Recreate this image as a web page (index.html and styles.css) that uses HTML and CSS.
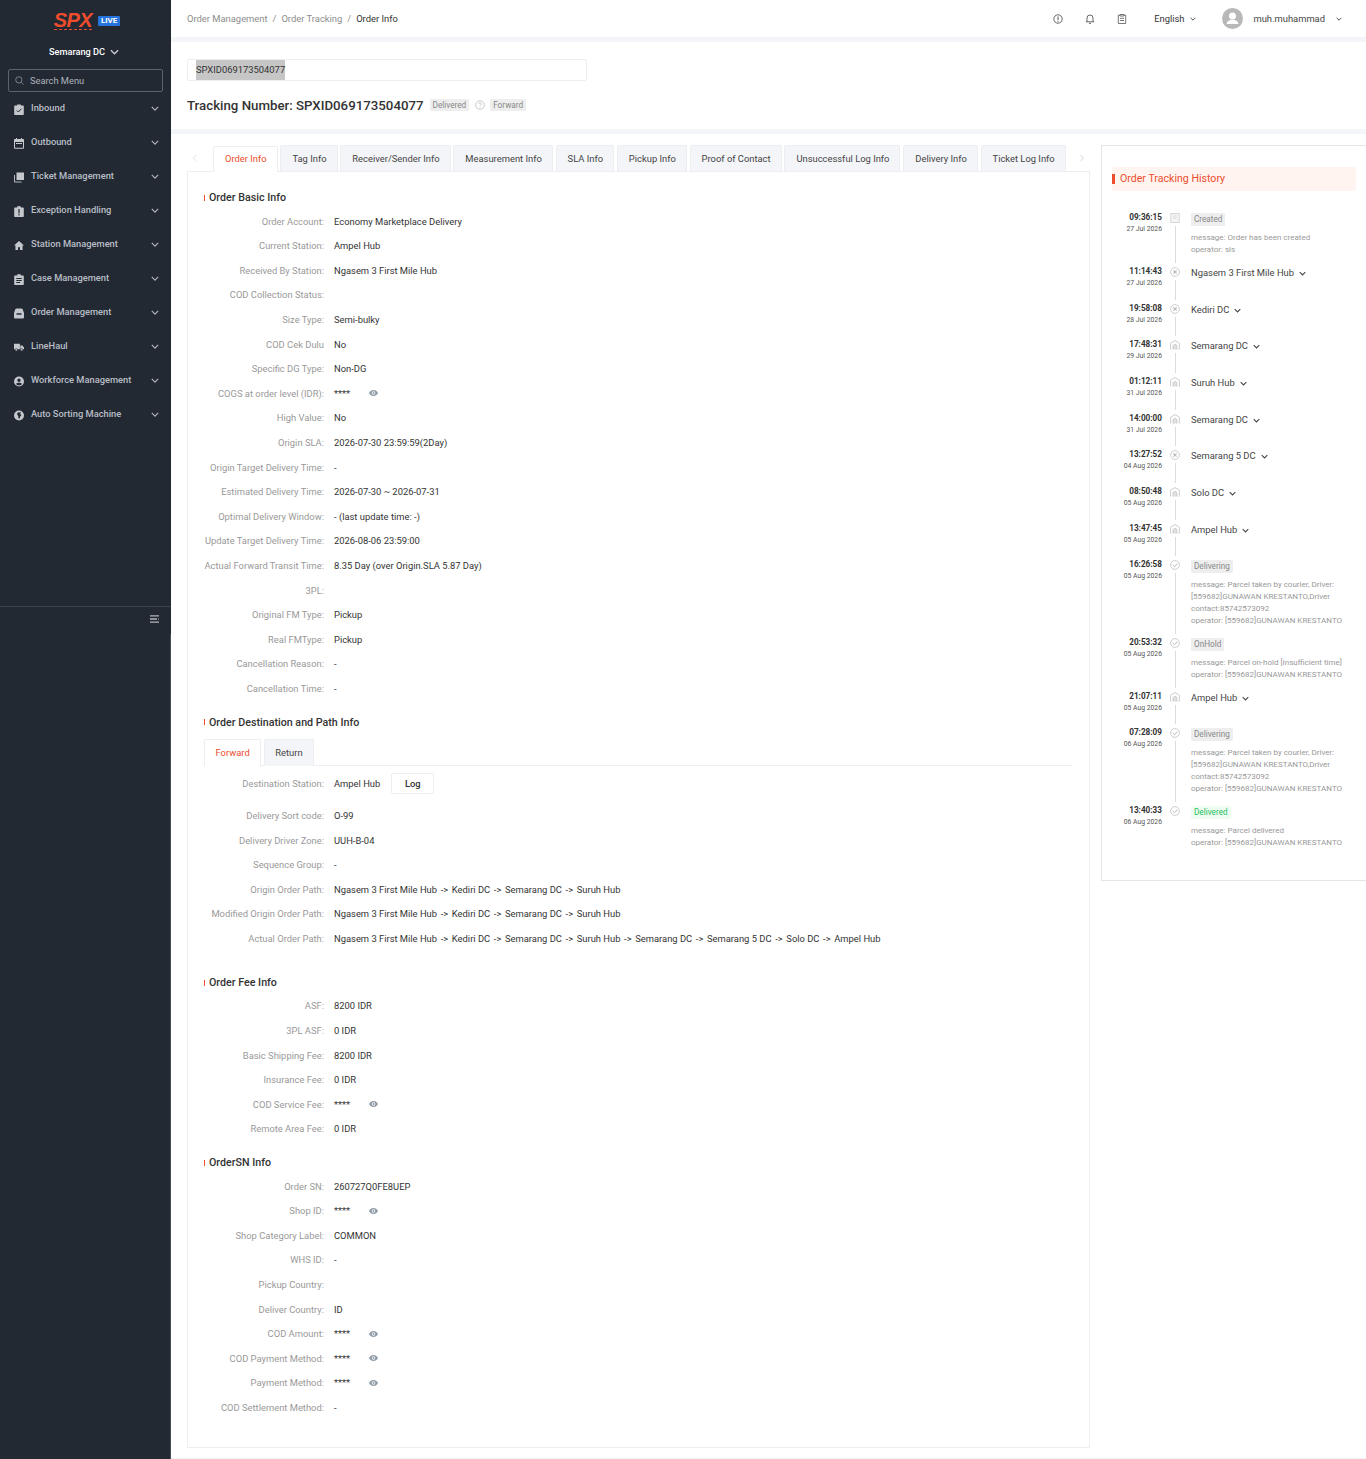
FILE: index.html
```html
<!DOCTYPE html>
<html lang="en">
<head>
<meta charset="utf-8">
<title>Order Info</title>
<link rel="stylesheet" href="styles.css">
</head>
<body>
<svg class="defs" width="0" height="0" aria-hidden="true">
  <symbol id="chev" viewBox="0 0 10 6"><path d="M1 1l4 4 4-4" fill="none" stroke="currentColor" stroke-width="1.5"/></symbol>
  <symbol id="eye" viewBox="0 0 12 8"><path fill="currentColor" fill-rule="evenodd" d="M6 0C3.4 0 1.2 1.6 0 4c1.2 2.4 3.4 4 6 4s4.8-1.6 6-4c-1.2-2.4-3.4-4-6-4zm0 6.4A2.4 2.4 0 1 1 6 1.600a2.400 2.400 0 0 1 0 4.800zM6 2.700a1.300 1.300 0 1 0 0 2.600 1.300 1.300 0 0 0 0-2.600z"/></symbol>
  <symbol id="t-doc" viewBox="0 0 10 10"><rect x=".8" y=".5" width="8.400" height="9" fill="#f4f4f4" stroke="#cfcfcf" stroke-width=".8"/><path d="M3 3h4M3 5h4" stroke="#d8d8d8" stroke-width=".8"/></symbol>
  <symbol id="t-x" viewBox="0 0 10 10"><circle cx="5" cy="5" r="4.400" fill="none" stroke="#c8c8c8" stroke-width=".9"/><path d="M3.300 3.300l3.400 3.400M6.700 3.300l-3.400 3.400" stroke="#b8b8b8" stroke-width="1.100"/></symbol>
  <symbol id="t-house" viewBox="0 0 10 10"><path d="M.6 9.600V3.200L5 .6l4.400 2.600v6.400" fill="none" stroke="#c8c8c8" stroke-width=".9"/><path d="M3 9.600V5.500l2-1.300 2 1.300v4.100" fill="#e0e0e0" stroke="#c8c8c8" stroke-width=".8"/></symbol>
  <symbol id="t-check" viewBox="0 0 10 10"><circle cx="5" cy="5" r="4.400" fill="none" stroke="#c8c8c8" stroke-width=".9"/><path d="M2.800 5l1.700 1.700 2.800-3" fill="none" stroke="#b8b8b8" stroke-width="1"/></symbol>
  <symbol id="m-inbound" viewBox="0 0 10 11"><path fill="currentColor" d="M1 1.500h2.200V.5h3.600v1H9a.8.800 0 0 1 .8.800v7.900a.8.800 0 0 1-.8.800H1a.8.800 0 0 1-.8-.8V2.300A.8.800 0 0 1 1 1.500z"/><path d="M2.800 6.400l1.600 1.600 3-3.200" fill="none" stroke="#222933" stroke-width="1"/></symbol>
  <symbol id="m-outbound" viewBox="0 0 10 11"><path fill="currentColor" d="M2 0h1v1h4V0h1v1h1.200a.8.800 0 0 1 .8.800V10a.8.800 0 0 1-.8.800H.8A.8.800 0 0 1 0 10V1.800A.8.800 0 0 1 .8 1H2zM1 4v5.800h8V4z"/><path fill="currentColor" d="M2 5h6v1H2z"/></symbol>
  <symbol id="m-ticket" viewBox="0 0 10 10"><path fill="currentColor" d="M2.500 0H10v7.500H2.500z"/><path fill="none" stroke="currentColor" stroke-width=".9" d="M.5 2.500v7h7"/></symbol>
  <symbol id="m-exception" viewBox="0 0 10 11"><path fill="currentColor" fill-rule="evenodd" d="M1 1.500h2.200V.3h3.600v1.200H9a.8.800 0 0 1 .8.800v7.900a.8.800 0 0 1-.8.800H1a.8.800 0 0 1-.8-.8V2.300A.8.800 0 0 1 1 1.500zM4.400 3v4.500h1.200V3zm0 5.200v1.200h1.200V8.200z"/></symbol>
  <symbol id="m-home" viewBox="0 0 11 10"><path fill="currentColor" d="M5.500 0L11 5H9.400v5H6.600V6.800H4.400V10H1.600V5H0z"/></symbol>
  <symbol id="m-case" viewBox="0 0 10 11"><path fill="currentColor" fill-rule="evenodd" d="M1 1.500h2.200V.3h3.600v1.200H9a.8.800 0 0 1 .8.800v7.900a.8.800 0 0 1-.8.800H1a.8.800 0 0 1-.8-.8V2.300A.8.800 0 0 1 1 1.500zM2.300 4v1h5.400V4zm0 2v1h5.400V6zm0 2v1h3.800V8z"/></symbol>
  <symbol id="m-order" viewBox="0 0 10 10"><path fill="currentColor" fill-rule="evenodd" d="M2.600 0h4.800a1.500 1.500 0 0 1 1.400 1L10 4.500V9a1 1 0 0 1-1 1H1a1 1 0 0 1-1-1V4.500L1.200 1A1.500 1.500 0 0 1 2.600 0zM2.500 4.800v1.400h5V4.800z"/></symbol>
  <symbol id="m-truck" viewBox="0 0 11 8"><path fill="currentColor" d="M0 0h6.500v6H0zM7 1.800h2.200L11 3.900V6H7z"/><circle cx="2.500" cy="6.500" r="1.300" fill="currentColor" stroke="#222933" stroke-width=".6"/><circle cx="8.500" cy="6.500" r="1.300" fill="currentColor" stroke="#222933" stroke-width=".6"/></symbol>
  <symbol id="m-user" viewBox="0 0 10 10"><path fill="currentColor" fill-rule="evenodd" d="M5 0a5 5 0 1 1 0 10A5 5 0 0 1 5 0zm0 2a1.700 1.700 0 1 0 0 3.400A1.700 1.700 0 0 0 5 2zM2 7.600c.7.800 1.800 1.300 3 1.300s2.300-.5 3-1.300C7.500 6.600 6.300 6.200 5 6.200s-2.500.4-3 1.400z"/></symbol>
  <symbol id="m-globe" viewBox="0 0 10 10"><path fill="currentColor" fill-rule="evenodd" d="M5 0a5 5 0 1 1 0 10A5 5 0 0 1 5 0zM3.700 2L3 4l1.500 1.500-.4 1.800 1.400 1 .7-2.300L7.300 5 6.200 3.300l.8-1.500z"/></symbol>
</svg>

<div class="app">
  <aside class="sidebar">
    <div class="logo">
      <span class="logo-mark">SPX</span>
      <span class="logo-live">LIVE</span>
    </div>
    <div class="station">Semarang DC <svg class="station-chev"><use href="#chev"/></svg></div>
    <div class="menu-search">
      <svg class="menu-search-icon" viewBox="0 0 10 10"><circle cx="4.300" cy="4.300" r="3.500" fill="none" stroke="currentColor" stroke-width=".9"/><path d="M7 7l2.500 2.500" stroke="currentColor" stroke-width=".9"/></svg>
      <span>Search Menu</span>
    </div>
    <nav class="menu">
      <div class="menu-item"><svg class="menu-icon"><use href="#m-inbound"/></svg><span class="menu-text">Inbound</span><svg class="menu-chev"><use href="#chev"/></svg></div>
      <div class="menu-item"><svg class="menu-icon"><use href="#m-outbound"/></svg><span class="menu-text">Outbound</span><svg class="menu-chev"><use href="#chev"/></svg></div>
      <div class="menu-item"><svg class="menu-icon"><use href="#m-ticket"/></svg><span class="menu-text">Ticket Management</span><svg class="menu-chev"><use href="#chev"/></svg></div>
      <div class="menu-item"><svg class="menu-icon"><use href="#m-exception"/></svg><span class="menu-text">Exception Handling</span><svg class="menu-chev"><use href="#chev"/></svg></div>
      <div class="menu-item"><svg class="menu-icon"><use href="#m-home"/></svg><span class="menu-text">Station Management</span><svg class="menu-chev"><use href="#chev"/></svg></div>
      <div class="menu-item"><svg class="menu-icon"><use href="#m-case"/></svg><span class="menu-text">Case Management</span><svg class="menu-chev"><use href="#chev"/></svg></div>
      <div class="menu-item"><svg class="menu-icon"><use href="#m-order"/></svg><span class="menu-text">Order Management</span><svg class="menu-chev"><use href="#chev"/></svg></div>
      <div class="menu-item"><svg class="menu-icon"><use href="#m-truck"/></svg><span class="menu-text">LineHaul</span><svg class="menu-chev"><use href="#chev"/></svg></div>
      <div class="menu-item"><svg class="menu-icon"><use href="#m-user"/></svg><span class="menu-text">Workforce Management</span><svg class="menu-chev"><use href="#chev"/></svg></div>
      <div class="menu-item"><svg class="menu-icon"><use href="#m-globe"/></svg><span class="menu-text">Auto Sorting Machine</span><svg class="menu-chev"><use href="#chev"/></svg></div>
    </nav>
    <div class="sidebar-foot">
      <svg class="collapse" viewBox="0 0 9 8"><path d="M0 .8h9M0 4h7M0 7.200h9" stroke="currentColor" stroke-width="1.300"/><path d="M8 3l1 1-1 1z" fill="currentColor"/></svg>
    </div>
    <div class="sidebar-rest"></div>
  </aside>

  <main class="main">
    <header class="topbar">
      <div class="crumbs">
        <span>Order Management</span><span class="crumb-sep">/</span><span>Order Tracking</span><span class="crumb-sep">/</span><span class="crumb-now">Order Info</span>
      </div>
      <div class="top-right">
        <svg class="top-icon" viewBox="0 0 10 10"><circle cx="5" cy="5" r="4.200" fill="none" stroke="currentColor" stroke-width=".9"/><path d="M5 2.500v3.500M5 6.800v1" stroke="currentColor" stroke-width="1"/></svg>
        <svg class="top-icon" viewBox="0 0 10 10"><path d="M2 7.500V4a3 3 0 0 1 6 0v3.500M.8 7.800h8.400M4 9.400h2" fill="none" stroke="currentColor" stroke-width=".9"/></svg>
        <svg class="top-icon" viewBox="0 0 10 10"><path d="M3 1.200H1.300v8.300h7.400V1.200H7M3 .5h4v1.500H3zM3 4.300h4M3 6.500h4" fill="none" stroke="currentColor" stroke-width=".8"/></svg>
        <span class="lang">English</span><svg class="top-chev"><use href="#chev"/></svg>
        <span class="avatar"><svg viewBox="0 0 21 21"><circle cx="10.500" cy="8" r="3.500" fill="#fff"/><path d="M4.500 16c.5-3 3-4.200 6-4.200s5.500 1.200 6 4.200z" fill="#fff"/></svg></span>
        <span class="user">muh.muhammad</span><svg class="top-chev user-chev"><use href="#chev"/></svg>
      </div>
    </header>

    <section class="search-area">
      <div class="search-input"><span class="selected">SPXID069173504077</span></div>
      <div class="title-row">
        <h1 class="track-title">Tracking Number: SPXID069173504077</h1>
        <span class="tag">Delivered</span>
        <svg class="help" viewBox="0 0 10 10"><circle cx="5" cy="5" r="4.300" fill="none" stroke="#b5b5b5" stroke-width=".7"/><path d="M3.700 4a1.300 1.300 0 1 1 1.900 1.100c-.4.300-.6.500-.6 1M5 7v.8" fill="none" stroke="#b5b5b5" stroke-width=".7"/></svg>
        <span class="tag">Forward</span>
      </div>
    </section>

    <section class="content">
      <div class="left">
        <div class="tabs-bar">
          <span class="tab-arrow tab-arrow-left"><svg viewBox="0 0 6 10"><path d="M5 1L1 5l4 4" fill="none" stroke="currentColor"/></svg></span>
          <span class="tab active">Order Info</span>
          <span class="tab">Tag Info</span>
          <span class="tab">Receiver/Sender Info</span>
          <span class="tab">Measurement Info</span>
          <span class="tab">SLA Info</span>
          <span class="tab">Pickup Info</span>
          <span class="tab">Proof of Contact</span>
          <span class="tab">Unsuccessful Log Info</span>
          <span class="tab">Delivery Info</span>
          <span class="tab">Ticket Log Info</span>
          <span class="tab-arrow tab-arrow-right"><svg viewBox="0 0 6 10"><path d="M1 1l4 4-4 4" fill="none" stroke="currentColor"/></svg></span>
        </div>
        <div class="panel">
          <h2 class="sec-title sec-first">Order Basic Info</h2>
          <div class="row"><span class="lbl">Order Account:</span><span class="val">Economy Marketplace Delivery</span></div>
          <div class="row"><span class="lbl">Current Station:</span><span class="val">Ampel Hub</span></div>
          <div class="row"><span class="lbl">Received By Station:</span><span class="val">Ngasem 3 First Mile Hub</span></div>
          <div class="row"><span class="lbl">COD Collection Status:</span><span class="val"></span></div>
          <div class="row"><span class="lbl">Size Type:</span><span class="val">Semi-bulky</span></div>
          <div class="row"><span class="lbl">COD Cek Dulu</span><span class="val">No</span></div>
          <div class="row"><span class="lbl">Specific DG Type:</span><span class="val">Non-DG</span></div>
          <div class="row"><span class="lbl">COGS at order level (IDR):</span><span class="val">****</span><svg class="eye"><use href="#eye"/></svg></div>
          <div class="row"><span class="lbl">High Value:</span><span class="val">No</span></div>
          <div class="row"><span class="lbl">Origin SLA:</span><span class="val">2026-07-30 23:59:59(2Day)</span></div>
          <div class="row"><span class="lbl">Origin Target Delivery Time:</span><span class="val">-</span></div>
          <div class="row"><span class="lbl">Estimated Delivery Time:</span><span class="val">2026-07-30 ~ 2026-07-31</span></div>
          <div class="row"><span class="lbl">Optimal Delivery Window:</span><span class="val">- (last update time: -)</span></div>
          <div class="row"><span class="lbl">Update Target Delivery Time:</span><span class="val">2026-08-06 23:59:00</span></div>
          <div class="row"><span class="lbl">Actual Forward Transit Time:</span><span class="val">8.35 Day (over Origin.SLA 5.87 Day)</span></div>
          <div class="row"><span class="lbl">3PL:</span><span class="val"></span></div>
          <div class="row"><span class="lbl">Original FM Type:</span><span class="val">Pickup</span></div>
          <div class="row"><span class="lbl">Real FMType:</span><span class="val">Pickup</span></div>
          <div class="row"><span class="lbl">Cancellation Reason:</span><span class="val">-</span></div>
          <div class="row"><span class="lbl">Cancellation Time:</span><span class="val">-</span></div>

          <h2 class="sec-title sec-dest">Order Destination and Path Info</h2>
          <div class="sub-tabs">
            <span class="sub-tab active">Forward</span>
            <span class="sub-tab">Return</span>
          </div>
          <div class="row row-dest"><span class="lbl">Destination Station:</span><span class="val">Ampel Hub</span><span class="log-btn">Log</span></div>
          <div class="row"><span class="lbl">Delivery Sort code:</span><span class="val">O-99</span></div>
          <div class="row"><span class="lbl">Delivery Driver Zone:</span><span class="val">UUH-B-04</span></div>
          <div class="row"><span class="lbl">Sequence Group:</span><span class="val">-</span></div>
          <div class="row"><span class="lbl">Origin Order Path:</span><span class="val path">Ngasem 3 First Mile Hub<i>-&gt;</i>Kediri DC<i>-&gt;</i>Semarang DC<i>-&gt;</i>Suruh Hub</span></div>
          <div class="row"><span class="lbl">Modified Origin Order Path:</span><span class="val path">Ngasem 3 First Mile Hub<i>-&gt;</i>Kediri DC<i>-&gt;</i>Semarang DC<i>-&gt;</i>Suruh Hub</span></div>
          <div class="row"><span class="lbl">Actual Order Path:</span><span class="val path">Ngasem 3 First Mile Hub<i>-&gt;</i>Kediri DC<i>-&gt;</i>Semarang DC<i>-&gt;</i>Suruh Hub<i>-&gt;</i>Semarang DC<i>-&gt;</i>Semarang 5 DC<i>-&gt;</i>Solo DC<i>-&gt;</i>Ampel Hub</span></div>

          <h2 class="sec-title sec-fee">Order Fee Info</h2>
          <div class="row"><span class="lbl">ASF:</span><span class="val">8200 IDR</span></div>
          <div class="row"><span class="lbl">3PL ASF:</span><span class="val">0 IDR</span></div>
          <div class="row"><span class="lbl">Basic Shipping Fee:</span><span class="val">8200 IDR</span></div>
          <div class="row"><span class="lbl">Insurance Fee:</span><span class="val">0 IDR</span></div>
          <div class="row"><span class="lbl">COD Service Fee:</span><span class="val">****</span><svg class="eye"><use href="#eye"/></svg></div>
          <div class="row"><span class="lbl">Remote Area Fee:</span><span class="val">0 IDR</span></div>

          <h2 class="sec-title sec-sn">OrderSN Info</h2>
          <div class="row"><span class="lbl">Order SN:</span><span class="val">260727Q0FE8UEP</span></div>
          <div class="row"><span class="lbl">Shop ID:</span><span class="val">****</span><svg class="eye"><use href="#eye"/></svg></div>
          <div class="row"><span class="lbl">Shop Category Label:</span><span class="val">COMMON</span></div>
          <div class="row"><span class="lbl">WHS ID:</span><span class="val">-</span></div>
          <div class="row"><span class="lbl">Pickup Country:</span><span class="val"></span></div>
          <div class="row"><span class="lbl">Deliver Country:</span><span class="val">ID</span></div>
          <div class="row"><span class="lbl">COD Amount:</span><span class="val">****</span><svg class="eye"><use href="#eye"/></svg></div>
          <div class="row"><span class="lbl">COD Payment Method:</span><span class="val">****</span><svg class="eye"><use href="#eye"/></svg></div>
          <div class="row"><span class="lbl">Payment Method:</span><span class="val">****</span><svg class="eye"><use href="#eye"/></svg></div>
          <div class="row"><span class="lbl">COD Settlement Method:</span><span class="val">-</span></div>
        </div>
      </div>

      <aside class="history">
        <div class="history-head">Order Tracking History</div>
        <div class="timeline">
          <div class="ev ev-54"><div class="ev-time"><b>09:36:15</b><span>27 Jul 2026</span></div><div class="ev-rail"><svg class="ev-icon"><use href="#t-doc"/></svg><i class="ev-line"></i></div><div class="ev-body"><span class="ev-tag">Created</span><p class="ev-msg">message: Order has been created<br>operator: sls</p></div></div>
          <div class="ev ev-37"><div class="ev-time"><b>11:14:43</b><span>27 Jul 2026</span></div><div class="ev-rail"><svg class="ev-icon"><use href="#t-x"/></svg><i class="ev-line"></i></div><div class="ev-body"><div class="ev-node">Ngasem 3 First Mile Hub<svg class="node-chev"><use href="#chev"/></svg></div></div></div>
          <div class="ev ev-36"><div class="ev-time"><b>19:58:08</b><span>28 Jul 2026</span></div><div class="ev-rail"><svg class="ev-icon"><use href="#t-x"/></svg><i class="ev-line"></i></div><div class="ev-body"><div class="ev-node">Kediri DC<svg class="node-chev"><use href="#chev"/></svg></div></div></div>
          <div class="ev ev-37"><div class="ev-time"><b>17:48:31</b><span>29 Jul 2026</span></div><div class="ev-rail"><svg class="ev-icon"><use href="#t-house"/></svg><i class="ev-line"></i></div><div class="ev-body"><div class="ev-node">Semarang DC<svg class="node-chev"><use href="#chev"/></svg></div></div></div>
          <div class="ev ev-37"><div class="ev-time"><b>01:12:11</b><span>31 Jul 2026</span></div><div class="ev-rail"><svg class="ev-icon"><use href="#t-house"/></svg><i class="ev-line"></i></div><div class="ev-body"><div class="ev-node">Suruh Hub<svg class="node-chev"><use href="#chev"/></svg></div></div></div>
          <div class="ev ev-36"><div class="ev-time"><b>14:00:00</b><span>31 Jul 2026</span></div><div class="ev-rail"><svg class="ev-icon"><use href="#t-house"/></svg><i class="ev-line"></i></div><div class="ev-body"><div class="ev-node">Semarang DC<svg class="node-chev"><use href="#chev"/></svg></div></div></div>
          <div class="ev ev-37"><div class="ev-time"><b>13:27:52</b><span>04 Aug 2026</span></div><div class="ev-rail"><svg class="ev-icon"><use href="#t-x"/></svg><i class="ev-line"></i></div><div class="ev-body"><div class="ev-node">Semarang 5 DC<svg class="node-chev"><use href="#chev"/></svg></div></div></div>
          <div class="ev ev-37"><div class="ev-time"><b>08:50:48</b><span>05 Aug 2026</span></div><div class="ev-rail"><svg class="ev-icon"><use href="#t-house"/></svg><i class="ev-line"></i></div><div class="ev-body"><div class="ev-node">Solo DC<svg class="node-chev"><use href="#chev"/></svg></div></div></div>
          <div class="ev ev-36"><div class="ev-time"><b>13:47:45</b><span>05 Aug 2026</span></div><div class="ev-rail"><svg class="ev-icon"><use href="#t-house"/></svg><i class="ev-line"></i></div><div class="ev-body"><div class="ev-node">Ampel Hub<svg class="node-chev"><use href="#chev"/></svg></div></div></div>
          <div class="ev ev-78"><div class="ev-time"><b>16:26:58</b><span>05 Aug 2026</span></div><div class="ev-rail"><svg class="ev-icon"><use href="#t-check"/></svg><i class="ev-line"></i></div><div class="ev-body"><span class="ev-tag">Delivering</span><p class="ev-msg">message: Parcel taken by courier, Driver: [559682]GUNAWAN KRESTANTO,Driver contact:85742573092<br>operator: [559682]GUNAWAN KRESTANTO</p></div></div>
          <div class="ev ev-54"><div class="ev-time"><b>20:53:32</b><span>05 Aug 2026</span></div><div class="ev-rail"><svg class="ev-icon"><use href="#t-check"/></svg><i class="ev-line"></i></div><div class="ev-body"><span class="ev-tag">OnHold</span><p class="ev-msg">message: Parcel on-hold [Insufficient time]<br>operator: [559682]GUNAWAN KRESTANTO</p></div></div>
          <div class="ev ev-36"><div class="ev-time"><b>21:07:11</b><span>05 Aug 2026</span></div><div class="ev-rail"><svg class="ev-icon"><use href="#t-house"/></svg><i class="ev-line"></i></div><div class="ev-body"><div class="ev-node">Ampel Hub<svg class="node-chev"><use href="#chev"/></svg></div></div></div>
          <div class="ev ev-78"><div class="ev-time"><b>07:28:09</b><span>06 Aug 2026</span></div><div class="ev-rail"><svg class="ev-icon"><use href="#t-check"/></svg><i class="ev-line"></i></div><div class="ev-body"><span class="ev-tag">Delivering</span><p class="ev-msg">message: Parcel taken by courier, Driver: [559682]GUNAWAN KRESTANTO,Driver contact:85742573092<br>operator: [559682]GUNAWAN KRESTANTO</p></div></div>
          <div class="ev ev-last"><div class="ev-time"><b>13:40:33</b><span>06 Aug 2026</span></div><div class="ev-rail"><svg class="ev-icon"><use href="#t-check"/></svg></div><div class="ev-body"><span class="ev-tag ev-tag-ok">Delivered</span><p class="ev-msg">message: Parcel delivered<br>operator: [559682]GUNAWAN KRESTANTO</p></div></div>
        </div>
      </aside>
    </section>
  </main>
</div>
</body>
</html>
```

FILE: styles.css
```css
* { box-sizing: border-box; }
html, body { margin: 0; padding: 0; }
body {
  font-family: Roboto, "Liberation Sans", sans-serif;
  font-size: 9.4px;
  color: #333;
  background: #fff;
}
.defs { position: absolute; }
.app { display: flex; width: 1366px; height: 1459px; overflow: hidden; }

/* sidebar */
.sidebar {
  width: 171px;
  flex: none;
  background: #222933;
  color: #b9bec6;
  display: flex;
  flex-direction: column;
}
.logo { height: 36px; padding: 6px 0 0 3px; display: flex; justify-content: center; align-items: center; gap: 6px; }
.logo-mark {
  font-family: "Liberation Sans", sans-serif;
  font-weight: 700;
  font-style: italic;
  font-size: 20px;
  line-height: 17px;
  color: #ee4d2d;
  border-bottom: 1px dashed #ee4d2d;
  letter-spacing: -.6px;
}
.logo-live {
  background: #2673dd;
  color: #fff;
  font-weight: 700;
  font-size: 8px;
  line-height: 10px;
  padding: 0 3px;
  border-radius: 1px;
}
.station {
  height: 33px;
  display: flex;
  align-items: center;
  justify-content: center;
  gap: 5px;
  color: #fff;
  font-weight: 500;
  font-size: 9.2px;
  padding: 0 3px 2px 0;
}
.station-chev { width: 9px; height: 6px; color: #c7cad0; }
.menu-search {
  margin: 0 8px;
  height: 23px;
  border: 1px solid #5d636d;
  border-radius: 2px;
  display: flex;
  align-items: center;
  gap: 6px;
  padding: 0 0 1px 6px;
  color: #aeb3bc;
  font-size: 9.3px;
}
.menu-search-icon { width: 9px; height: 9px; color: #8f949c; }
.menu { height: 514px; flex: none; margin-top: -1px; font-size: 9.3px; }
.menu-item {
  height: 34px;
  display: flex;
  align-items: center;
  padding: 0 12px 0 14px;
  font-weight: 500;
}
.menu-icon { width: 10px; height: 11px; flex: none; color: #c4c7cc; margin-top: 2px; }
.menu-text { flex: 1; margin-left: 7px; margin-top: -2px; }
.menu-chev { width: 8px; height: 5px; color: #aeb3bc; flex: none; }
.sidebar-foot {
  margin-top: 1px;
  border-top: 1px solid #3b424c;
  height: 28px;
  flex: none;
  display: flex;
  justify-content: flex-end;
  align-items: center;
  padding: 0 12px 4px 0;
  color: #b4b7bc;
}
.collapse { width: 9px; height: 8px; }
.sidebar-rest { flex: 1; border-right: 1px solid #484e58; }

/* main */
.main { flex: 1; min-width: 0; background: #fff; }
.topbar {
  height: 42px;
  border-bottom: 5px solid #f4f5f9;
  display: flex;
  justify-content: space-between;
  align-items: center;
  padding-left: 16px;
  color: #8c8c8c;
}
.crumb-sep { margin: 0 5px; }
.crumb-now { color: #333; }
.top-right { display: flex; align-items: center; color: #555; }
.top-icon { width: 10px; height: 10px; margin-right: 22px; }
.lang { margin-left: 5px; color: #333; }
.top-chev { width: 6px; height: 4px; margin-left: 6px; color: #444; }
.avatar { width: 21px; height: 21px; border-radius: 50%; background: #b8b8b8; margin-left: 26px; overflow: hidden; display: block; }
.avatar svg { display: block; width: 21px; height: 21px; }
.user { margin-left: 10px; color: #444; }
.user-chev { margin-left: 11px; margin-right: 24px; }

.search-area { height: 92px; border-bottom: 5px solid #f4f5f9; padding: 17px 16px 0; }
.search-input {
  width: 400px;
  height: 22px;
  border: 1px solid #eceef2;
  border-radius: 2px;
  padding-left: 8px;
  display: flex;
}
.selected { background: #c6c6c6; color: #333; line-height: 20px; }
.title-row { display: flex; align-items: center; margin-top: 16px; height: 16px; }
.track-title { margin: 0 6px 0 0; font-size: 13.28px; font-weight: 500; color: #333; }
.tag { background: #eeeeee; color: #888; font-size: 8.2px; line-height: 12px; padding: 0 3px; border-radius: 1px; }
.help { width: 10px; height: 10px; margin: 0 5px 0 6px; }

.content { display: flex; height: 1325px; border-bottom: 1px solid #f4f5f9; padding: 11px 0 0 16px; align-items: flex-start; }
.left { width: 903px; flex: none; }
.tabs-bar { height: 26px; display: flex; align-items: stretch; position: relative; padding-left: 26px; gap: 2.8px; white-space: nowrap; }
.tab-arrow { color: #ccc; display: flex; align-items: center; position: absolute; }
.tab-arrow svg { width: 6px; height: 8px; }
.tab-arrow-left { left: 5px; top: 9px; color: #ddd; }
.tab-arrow-right { left: 892px; top: 9px; }
.tab {
  padding: 0 10px 0 11px;
  background: #f4f5f9;
  border: 1px solid #eceef2;
  border-bottom: 0;
  border-radius: 2px 2px 0 0;
  display: flex;
  align-items: center;
  color: #444;
}
.tab.active { background: #fff; color: #ee4d2d; position: relative; top: 1px; z-index: 1; padding-bottom: 2px; }
.panel {
  height: 1277px;
  border: 1px solid #eceef2;
  padding: 12.85px 17px 0 16px;
}
.sec-title {
  margin: 0;
  height: 24px;
  display: flex;
  align-items: center;
  font-size: 10.7px;
  font-weight: 500;
  color: #333;
  padding: 2px 0 0 5px;
  position: relative;
}
.sec-title::before { content: ""; position: absolute; left: 0; top: 10px; width: 1px; height: 6px; background: #ee4d2d; }
.sec-dest { margin-top: 8.45px; }
.sec-fee { margin-top: 18.9px; }
.sec-sn { margin-top: 8.7px; }
.row { height: 24.6px; display: flex; align-items: center; }
.lbl { width: 120px; flex: none; text-align: right; color: #999; }
.val { margin-left: 10px; color: #333; white-space: nowrap; }
.path i { font-style: normal; margin: 0 3.65px; }
.eye { width: 9px; height: 6px; margin-left: 19px; color: #8e9aa6; }
.sub-tabs { display: flex; gap: 2.5px; height: 27px; margin-top: 5.5px; border-bottom: 1px solid #eceef2; }
.sub-tab { padding: 0 10.5px; height: 27px; display: flex; align-items: center; background: #f4f5f9; border: 1px solid #eceef2; border-bottom: 0; border-radius: 2px 2px 0 0; color: #444; }
.sub-tab.active { background: #fff; color: #ee4d2d; }
.row-dest { margin-top: 5.5px; height: 32px; padding-bottom: 8px; }
.log-btn { margin-left: 11px; height: 21px; width: 43px; display: flex; align-items: center; justify-content: center; border: 1px solid #eceef2; border-radius: 2px; color: #333; font-weight: 500; }

/* history */
.history {
  flex: none;
  width: 300px;
  height: 736px;
  margin-left: 11px;
  border: 1px solid #e5e5e5;
  border-right: 0;
  padding: 21px 0 0 10px;
}
.history-head {
  width: 244px;
  height: 24px;
  background: #fff4f0;
  border-radius: 2px;
  color: #ee4d2d;
  font-size: 10.6px;
  display: flex;
  align-items: center;
  padding: 0 0 2px 8px;
  position: relative;
}
.history-head::before { content: ""; position: absolute; left: 0; top: 7px; width: 3px; height: 10px; background: #ee4d2d; }
.timeline { margin-top: 20px; }
.ev { display: flex; width: 254px; }
.ev-54 { height: 54px; }
.ev-37 { height: 37px; }
.ev-36 { height: 36px; }
.ev-78 { height: 78px; }
.ev-time { width: 50px; flex: none; text-align: right; display: flex; flex-direction: column; padding-top: 1px; }
.ev-time b { font-size: 8.2px; font-weight: 700; line-height: 11px; color: #333; }
.ev-time span { font-size: 6.8px; line-height: 12px; color: #555; }
.ev-rail { width: 26px; flex: none; display: flex; flex-direction: column; align-items: center; padding-top: 2px; }
.ev-icon { width: 10px; height: 10px; flex: none; }
.ev-line { width: 1px; flex: 1; background: #dcdcdc; margin: 3px 0 2px; display: block; }
.ev-body { margin-left: 3px; width: 165px; padding-top: 2px; }
.ev-tag { display: inline-block; background: #eeeeee; color: #888; font-size: 8.2px; line-height: 13px; padding: 0 3px; border-radius: 1px; vertical-align: top; }
.ev-tag-ok { background: #eefcf2; color: #1fc05a; }
.ev-msg { margin: 6px 0 0; font-size: 8px; line-height: 12px; color: #999; }
.ev-node { font-size: 9.4px; line-height: 12px; color: #444; display: flex; align-items: center; }
.node-chev { width: 7px; height: 5px; margin-left: 5px; color: #444; }
```
